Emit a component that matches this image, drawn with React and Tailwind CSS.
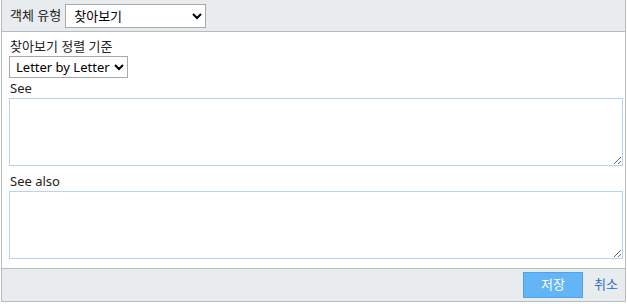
import { useState } from 'react';

const font = { fontFamily: '"Noto Sans", "Noto Sans CJK KR", sans-serif' };

export default function App() {
  const [type, setType] = useState('browse');
  const [sort, setSort] = useState('letter');

  return (
    <div className="ml-[1px] w-[625px] h-[302px] flex flex-col border-x border-b border-[#b4bcc0] bg-white text-[13px] text-[#222]" style={font}>
      <div className="h-[32px] flex items-center gap-[4px] pl-[8px] bg-[#e9ecef] border-b border-[#b4bcc0]">
        <span>객체 유형</span>
        <select
          value={type}
          onChange={(e) => setType(e.target.value)}
          className="w-[141px] h-[24px] pl-[4px] bg-white border border-[#a9a9a9] text-[13px] text-black"
        >
          <option value="browse">찾아보기</option>
        </select>
      </div>

      <div className="flex-1 flex flex-col pl-[7px] pr-[2px] pt-[5px]">
        <label className="leading-[19px] pl-[1px]">찾아보기 정렬 기준</label>
        <select
          value={sort}
          onChange={(e) => setSort(e.target.value)}
          className="w-[119px] h-[22px] pl-[2px] bg-white border border-[#a9a9a9] text-[13px] text-black"
        >
          <option value="letter">Letter by Letter</option>
          <option value="word">Word by Word</option>
        </select>
        <label className="mt-[1px] leading-[19px] pl-[1px]">See</label>
        <textarea className="h-[68px] w-full border border-[#b6d3f5] resize-y outline-none" />
        <label className="mt-[6px] leading-[19px] pl-[1px]">See also</label>
        <textarea className="h-[68px] w-full border border-[#b6d3f5] resize-y outline-none" />
      </div>

      <div className="h-[33px] flex items-center justify-end gap-[11px] pr-[7px] bg-[#e9ecef] border-t border-[#b4bcc0]">
        <button className="w-[60px] h-[26px] bg-[#64b5f6] border border-[#4ea3ee] text-white text-[13px]">저장</button>
        <a href="#" className="text-[#2a6fc9]">취소</a>
      </div>
    </div>
  );
}
